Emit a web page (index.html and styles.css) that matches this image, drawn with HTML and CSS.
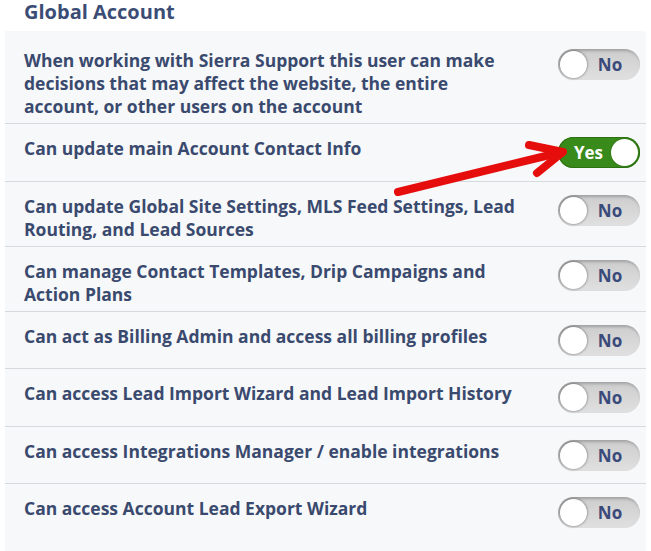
FILE: index.html
```html
<!DOCTYPE html>
<html lang="en">
<head>
<meta charset="utf-8">
<title>Global Account Permissions</title>
<link rel="stylesheet" href="styles.css">
</head>
<body>
<div class="page">
  <h2 class="section-title">Global Account</h2>
  <div class="card">
    <div class="row">
      <div class="label">When working with Sierra Support this user can make decisions that may affect the website, the entire account, or other users on the account</div>
      <div class="switch"><span class="knob"></span><span class="state">No</span></div>
    </div>
    <div class="row">
      <div class="label">Can update main Account Contact Info</div>
      <div class="switch on"><span class="state">Yes</span><span class="knob"></span></div>
    </div>
    <div class="row">
      <div class="label">Can update Global Site Settings, MLS Feed Settings, Lead Routing, and Lead Sources</div>
      <div class="switch"><span class="knob"></span><span class="state">No</span></div>
    </div>
    <div class="row">
      <div class="label">Can manage Contact Templates, Drip Campaigns and Action Plans</div>
      <div class="switch"><span class="knob"></span><span class="state">No</span></div>
    </div>
    <div class="row">
      <div class="label">Can act as Billing Admin and access all billing profiles</div>
      <div class="switch"><span class="knob"></span><span class="state">No</span></div>
    </div>
    <div class="row">
      <div class="label">Can access Lead Import Wizard and Lead Import History</div>
      <div class="switch"><span class="knob"></span><span class="state">No</span></div>
    </div>
    <div class="row">
      <div class="label">Can access Integrations Manager / enable integrations</div>
      <div class="switch"><span class="knob"></span><span class="state">No</span></div>
    </div>
    <div class="row last">
      <div class="label">Can access Account Lead Export Wizard</div>
      <div class="switch"><span class="knob"></span><span class="state">No</span></div>
    </div>
  </div>

  <!-- annotation arrow pointing at the enabled switch -->
  <svg class="callout" width="651" height="551" viewBox="0 0 651 551">
    <g stroke="#e60d0d" stroke-width="8" stroke-linecap="round" stroke-linejoin="round" fill="none">
      <line x1="398" y1="192" x2="562" y2="152"/>
      <polyline points="529,145 563,152 537,173"/>
    </g>
  </svg>
</div>
</body>
</html>
```

FILE: styles.css
```css
html, body {
  margin: 0;
  padding: 0;
  background: #ffffff;
}

.page {
  position: relative;
  width: 651px;
  height: 551px;
  overflow: hidden;
  font-family: "Open Sans", "Noto Sans", sans-serif;
  color: #3a4a6e;
}

.section-title {
  margin: 0;
  height: 29px;
  padding-top: 2px;
  padding-left: 24px;
  font-size: 20px;
  font-weight: 700;
  line-height: 20px;
  color: #3b4d75;
}

.card {
  margin-left: 5px;
  width: 641px;
  background: #f7f8fa;
  padding-top: 5px;
  min-height: 520px;
}

.row {
  display: flex;
  justify-content: space-between;
  align-items: flex-start;
  padding: 13px 6px 5px 19px;
  border-bottom: 1px solid #d7dadd;
}

.row.last {
  border-bottom: none;
}

.label {
  width: 495px;
  font-size: 17.5px;
  font-weight: 700;
  line-height: 23px;
}

.switch {
  flex: none;
  display: flex;
  align-items: center;
  box-sizing: border-box;
  width: 82px;
  height: 31px;
  margin-bottom: 7.5px;
  padding: 0 2px;
  border-radius: 16px;
  background: linear-gradient(#cdcdcd, #e0e0e0);
  box-shadow: inset 1px 2px 3px rgba(0, 0, 0, 0.22);
}

.knob {
  flex: none;
  width: 27px;
  height: 27px;
  border-radius: 50%;
  background: #ffffff;
  box-shadow: 0 0 2px 1px rgba(0, 0, 0, 0.25);
}

.state {
  flex: 1;
  text-align: center;
  font-size: 17px;
  font-weight: 700;
  line-height: 31px;
  color: #3a4a7a;
}

.switch .knob + .state {
  padding-right: 5px;
}

.switch.on {
  background: #388a1b;
  box-shadow: inset 0 0 0 1px #2d7212;
}

.switch.on .state {
  padding-left: 6px;
  color: #ffffff;
}

.switch.on .knob {
  box-shadow: 0 0 2px rgba(0, 0, 0, 0.3);
}

.callout {
  position: absolute;
  left: 0;
  top: 0;
  pointer-events: none;
}
```
